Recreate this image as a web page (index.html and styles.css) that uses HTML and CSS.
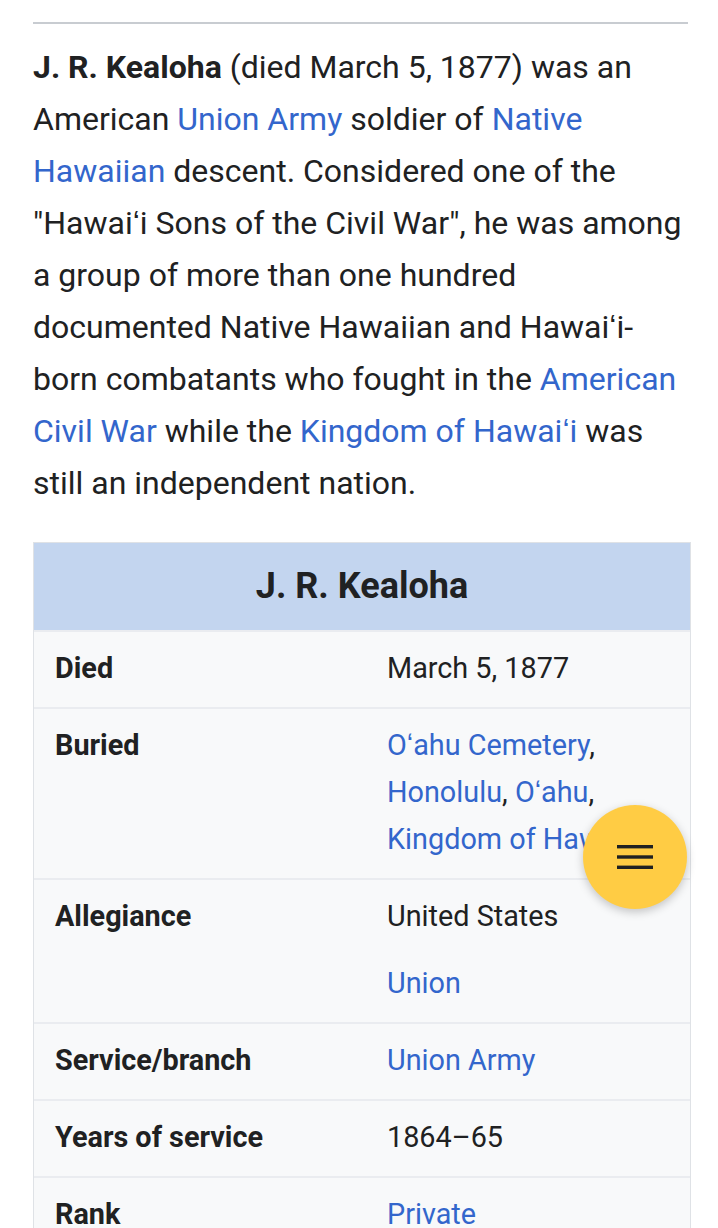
FILE: index.html
```html
<!DOCTYPE html>
<html lang="en">
<head>
<meta charset="utf-8">
<title>J. R. Kealoha</title>
<link rel="stylesheet" href="styles.css">
</head>
<body>
<main class="content">
  <hr class="rule">
  <p class="intro"><b>J. R. Kealoha</b> (died March 5, 1877) was an American <a href="#">Union Army</a> soldier of <a href="#">Native Hawaiian</a> descent. Considered one of the "Hawaiʻi Sons of the Civil War", he was among a group of more than one hundred documented Native Hawaiian and Hawaiʻi-born combatants who fought in the <a href="#">American Civil War</a> while the <a href="#">Kingdom of Hawaiʻi</a> was still an independent nation.</p>

  <div class="infobox">
    <div class="infobox-title">J. R. Kealoha</div>
    <div class="row">
      <div class="label">Died</div>
      <div class="value">March 5, 1877</div>
    </div>
    <div class="row">
      <div class="label">Buried</div>
      <div class="value"><a href="#">Oʻahu Cemetery</a>, <a href="#">Honolulu</a>, <a href="#">Oʻahu</a>, <a href="#">Kingdom of Hawaiʻi</a></div>
    </div>
    <div class="row">
      <div class="label">Allegiance</div>
      <div class="value">
        <div>United States</div>
        <div class="next"><a href="#">Union</a></div>
      </div>
    </div>
    <div class="row">
      <div class="label">Service/branch</div>
      <div class="value"><a href="#">Union Army</a></div>
    </div>
    <div class="row">
      <div class="label">Years of service</div>
      <div class="value">1864–65</div>
    </div>
    <div class="row">
      <div class="label">Rank</div>
      <div class="value"><a href="#">Private</a></div>
    </div>
  </div>
</main>
<button class="fab" aria-label="Menu">
  <svg width="36" height="24" viewBox="0 0 36 24"><rect x="0" y="2" width="36" height="3.4" fill="#202122"/><rect x="0" y="12.3" width="36" height="3.4" fill="#202122"/><rect x="0" y="22.6" width="36" height="3.4" fill="#202122"/></svg>
</button>
</body>
</html>
```
FILE: styles.css
```css
html, body {
  margin: 0;
  padding: 0;
  background: #ffffff;
}
body {
  font-family: Roboto, "Liberation Sans", sans-serif;
  color: #202122;
  height: 1228px;
  overflow: hidden;
}
a {
  color: #3366cc;
  text-decoration: none;
}
.content {
  padding: 22px 30px 0 33px;
}
.rule {
  margin: 0;
  border: 0;
  height: 2px;
  background: #c8ccd1;
}
.intro {
  margin: 17px 0 0 0;
  font-size: 32px;
  line-height: 52px;
}
.infobox {
  margin-top: 33px;
  width: 656px;
  border: 1px solid #dfe2e6;
  background: #f8f9fa;
  font-size: 28.8px;
  line-height: 47px;
}
.infobox-title {
  background: #c3d5ef;
  text-align: center;
  font-weight: bold;
  font-size: 36px;
  height: 87px;
  line-height: 87px;
}
.row {
  display: grid;
  grid-template-columns: 353px 1fr;
  border-top: 2px solid #eaecf0;
  padding: 13px 0 15px 0;
}
.label {
  font-weight: bold;
  padding-left: 21px;
}
.value {
  padding-right: 10px;
}
.next {
  margin-top: 20px;
}
.fab {
  position: fixed;
  right: 31px;
  top: 805px;
  width: 104px;
  height: 104px;
  border-radius: 50%;
  border: 0;
  padding: 0;
  background: #ffcc44;
  box-shadow: 0 3px 10px rgba(0, 0, 0, 0.22);
  display: flex;
  align-items: center;
  justify-content: center;
}
.fab svg {
  display: block;
  overflow: visible;
  margin-top: -4px;
}
```
